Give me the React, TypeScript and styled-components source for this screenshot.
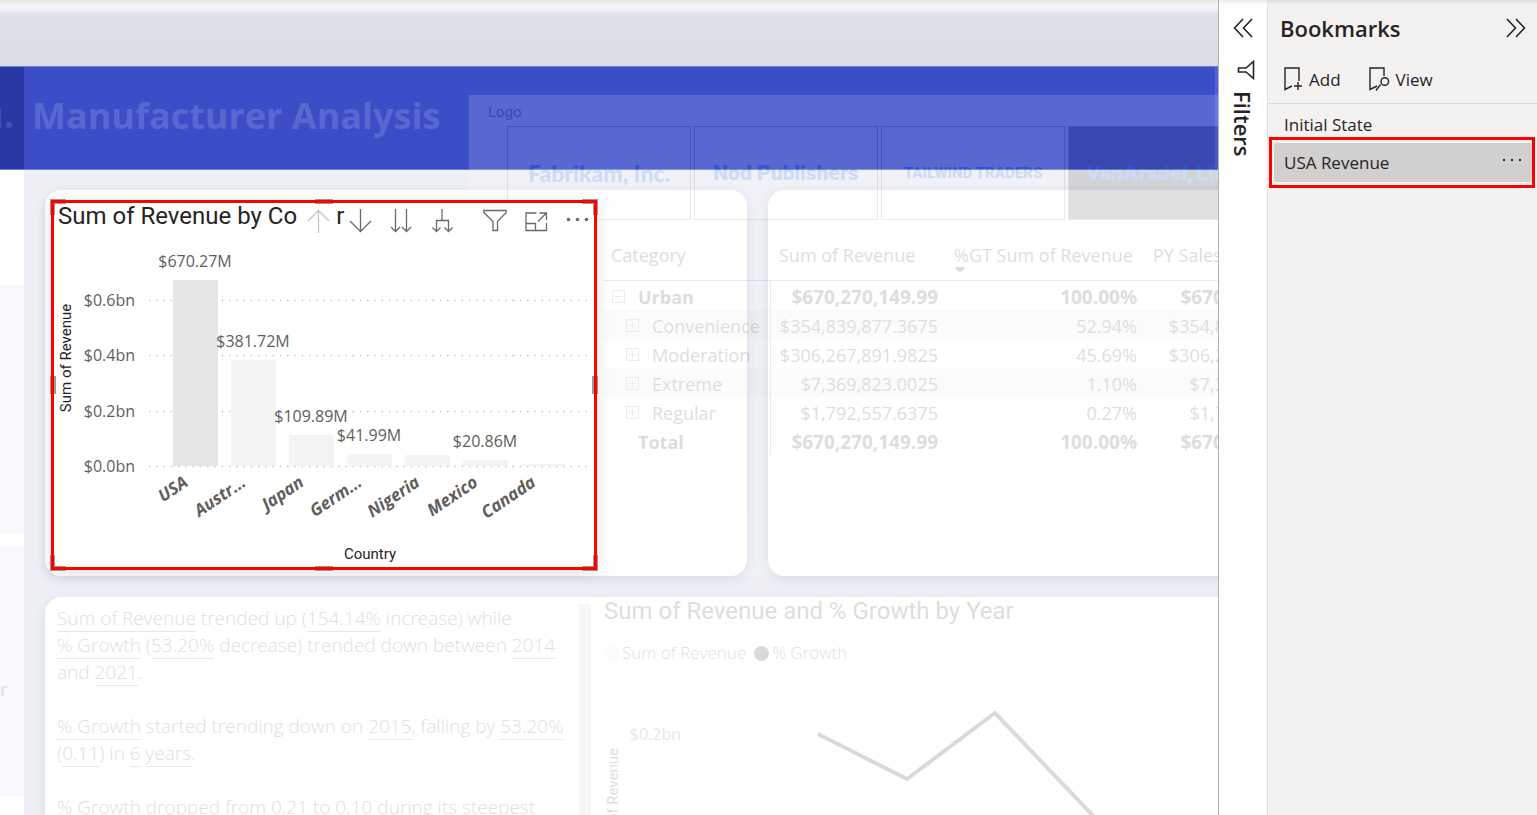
import React from "react";
import styled, { createGlobalStyle, css } from "styled-components";

const sans = `"Open Sans", "Noto Sans", sans-serif`;
const din = `Roboto, "Liberation Sans", sans-serif`;

const GlobalStyle = createGlobalStyle`
  *, *::before, *::after { box-sizing: border-box; }
  body { margin: 0; font-family: ${sans}; color: #252423; background: #eef0f6; }
  h1, h2, p, ul { margin: 0; padding: 0; }
  button { font: inherit; color: inherit; background: none; border: 0; padding: 0; cursor: pointer; }
  svg { display: block; }
`;

const Shell = styled.div`
  display: flex;
  height: 100vh;
  overflow: hidden;
`;

/* ---------- report canvas ---------- */

const Canvas = styled.main`
  position: relative;
  flex: 1;
  min-width: 0;
  overflow: hidden;
  display: flex;
  flex-direction: column;
`;

const TopBand = styled.div`
  height: 66px;
  background: linear-gradient(#e4e4e4 0, #f5f5f5 4px, #f3f3f3 9px, #dee1e9 15px, #dadde5 66px);
`;

const Banner = styled.header`
  display: flex;
  height: 104px;
  background: #3b4ec8;
  border-top: 1px solid #7380d2;
  border-bottom: 1px solid #6f7edb;
`;

const BannerRail = styled.div`
  width: 24px;
  display: flex;
  align-items: center;
  justify-content: flex-end;
  padding: 0 10px 8px 0;
  background: #2838a4;
  color: #4452b2;
  font-size: 36px;
  font-weight: 700;
  overflow: hidden;
`;

const BannerTitle = styled.h1`
  flex: 1;
  padding-left: 8px;
  color: #5868d0;
  font-size: 36px;
  line-height: 98px;
  font-weight: 700;
  border-right: 3px solid #4f63dc;
`;

const Body = styled.div`
  flex: 1;
  display: flex;
  min-height: 0;
`;

const Rail = styled.div`
  width: 24px;
  flex: none;
  display: flex;
  flex-direction: column;
  gap: 13px;
  padding-top: 115px;
  background: #fff;
`;

const RailBlock = styled.div`
  height: 249px;
  flex: none;
  background: #f8f9fc;
  color: #dcdcdf;
  font-size: 19px;
  line-height: 284px;
`;

const Page = styled.div`
  flex: 1;
  min-width: 0;
  display: flex;
  flex-direction: column;
  gap: 21px;
  padding: 20px 0 0 21px;
  margin-right: -40px;
`;

const CardRow = styled.div`
  display: flex;
  flex: none;
  gap: 21px;
`;

const Card = styled.div<{ $width?: number; $height: number }>`
  flex: ${(p) => (p.$width ? "none" : 1)};
  ${(p) => p.$width && css`width: ${p.$width}px;`}
  min-height: ${(p) => p.$height}px;
  background: #fff;
  border-radius: 16px;
  box-shadow: 0 3px 12px rgba(30, 40, 70, 0.1);
`;

/* A visual has its own spot on the free report canvas. */
const Visual = styled.section<{ $x: number; $y: number; $w?: number; $h?: number; $faded?: boolean }>`
  position: absolute;
  left: ${(p) => p.$x}px;
  top: ${(p) => p.$y}px;
  ${(p) => (p.$w ? css`width: ${p.$w}px;` : css`right: 0;`)}
  ${(p) => p.$h && css`height: ${p.$h}px;`}
  background: #fff;
  opacity: ${(p) => (p.$faded ? 0.15 : 1)};
`;

/* ---------- logo slicer ---------- */

const SlicerLabel = styled.p`
  padding: 7px 0 0 19px;
  font-family: ${din};
  font-size: 15px;
  line-height: 20px;
`;

const Tiles = styled.div`
  display: flex;
  gap: 3px;
  padding: 4px 0 0 38px;
  overflow: hidden;
`;

const Tile = styled.button<{ $selected?: boolean; $font: string; $size: number }>`
  flex: none;
  width: 184px;
  height: 94px;
  border: 1px solid #777;
  background: ${(p) => (p.$selected ? "#333" : "transparent")};
  color: #146eff;
  font-family: ${(p) => p.$font};
  font-size: ${(p) => p.$size}px;
  font-weight: 900;
  white-space: nowrap;
`;

/* ---------- selected column chart ---------- */

const ChartVisual = styled(Visual)`
  isolation: isolate;
  padding: 3px;
  box-shadow: 0 3px 14px rgba(0, 0, 0, 0.12);
  &::after {
    content: "";
    position: absolute;
    inset: 0;
    border: 3px solid #fe0000;
    pointer-events: none;
  }
`;

const ChartHeader = styled.div`
  display: flex;
  height: 31px;
  padding-left: 4px;
`;

const ChartTitle = styled.h2`
  font-family: ${din};
  font-size: 24px;
  line-height: 26px;
  font-weight: 400;
  white-space: nowrap;
`;

const TitleEnd = styled(ChartTitle).attrs({ as: "span" })`
  margin: 0 4px 0 6px;
`;

const Tool = styled.button<{ $dim?: boolean; $gap?: number }>`
  width: 24px;
  height: 24px;
  margin: 6px 0 0 ${(p) => p.$gap ?? 17}px;
  color: ${(p) => (p.$dim ? "#c4c4c4" : "#6b6a69")};
`;

const Handle = styled.i<{ $edge: string }>`
  position: absolute;
  z-index: -1;
  background: #999;
  ${(p) => p.$edge}
`;

const AxisText = styled.text`
  font-family: ${sans};
  font-size: 16px;
  fill: #605e5c;
`;

const CategoryText = styled(AxisText)`
  font-size: 17px;
  font-weight: 700;
  font-style: italic;
`;

const AxisTitle = styled.text`
  font-family: ${din};
  font-size: 15px;
  fill: #252423;
`;

const columns = [
  { name: "USA", top: 46, value: "$670.27M", valueY: 33 },
  { name: "Austr...", top: 126, value: "$381.72M", valueY: 113 },
  { name: "Japan", top: 201, value: "$109.89M", valueY: 188 },
  { name: "Germ...", top: 220, value: "$41.99M", valueY: 207 },
  { name: "Nigeria", top: 221 },
  { name: "Mexico", top: 226, value: "$20.86M", valueY: 213 },
  { name: "Canada", top: 230 },
];

const ticks = [
  { label: "$0.6bn", y: 66 },
  { label: "$0.4bn", y: 121 },
  { label: "$0.2bn", y: 177 },
  { label: "$0.0bn", y: 232 },
];

function ColumnChart() {
  return (
    <svg width="540" height="332" viewBox="1 0 540 332" role="img" aria-label="Sum of Revenue by Country">
      {ticks.map((t) => (
        <g key={t.label}>
          <line x1="96" x2="535" y1={t.y + 0.5} y2={t.y + 0.5} stroke="#c3c2c1" strokeWidth="1.4" strokeDasharray="1.4 5.87" />
          <AxisText x="82" y={t.y + 6} textAnchor="end">{t.label}</AxisText>
        </g>
      ))}
      {columns.map((c, i) => (
        <g key={c.name}>
          <rect x={120 + i * 58} y={c.top} width="45" height={232 - c.top} fill={i === 0 ? "#e6e6e6" : "#f4f4f4"} />
          {c.value && <AxisText x={142 + i * 58} y={c.valueY} textAnchor="middle">{c.value}</AxisText>}
          <CategoryText textAnchor="end" transform={`translate(${136 + i * 58} 251) rotate(-34)`}>{c.name}</CategoryText>
        </g>
      ))}
      <AxisTitle textAnchor="middle" transform="translate(18 124) rotate(-90)">Sum of Revenue</AxisTitle>
      <AxisTitle x="317" y="325" textAnchor="middle">Country</AxisTitle>
    </svg>
  );
}

/* ---------- matrix ---------- */

const Matrix = styled.table`
  margin-top: 9px;
  border-collapse: separate;
  border-spacing: 0;
  table-layout: fixed;
  width: 732px;
  font-size: 18px;
  line-height: 24px;
`;

const Head = styled.th`
  height: 41px;
  padding: 3px 0 0 8px;
  vertical-align: top;
  text-align: left;
  font-weight: 400;
  white-space: nowrap;
  border-bottom: 1px solid #2a93f5;
`;

const SortMark = styled.i`
  display: block;
  width: 0;
  border: 6px solid transparent;
  border-top-color: #252423;
  border-bottom: 0;
`;

const Row = styled.tr<{ $bold?: boolean; $striped?: boolean }>`
  height: 29px;
  font-weight: ${(p) => (p.$bold ? 700 : 400)};
  background: ${(p) => (p.$striped ? "#e6e6e6" : "transparent")};
`;

const RowHead = styled.th<{ $indent: number }>`
  padding: 2px 0 0 ${(p) => p.$indent}px;
  text-align: left;
  font-weight: inherit;
  white-space: nowrap;
  border-right: 1px solid #2a93f5;
`;

const RowLabel = styled.span`
  display: flex;
  align-items: center;
  gap: 13px;
`;

const Cell = styled.td<{ $bold?: boolean }>`
  padding: 2px 8px 0 0;
  text-align: right;
  font-size: ${(p) => (p.$bold ? 19 : 18)}px;
`;

const rows = [
  { name: "Urban", indent: 9, sign: "-", revenue: "$670,270,149.99", share: "100.00%", bold: true },
  { name: "Convenience", indent: 23, sign: "+", revenue: "$354,839,877.3675", share: "52.94%", striped: true },
  { name: "Moderation", indent: 23, sign: "+", revenue: "$306,267,891.9825", share: "45.69%" },
  { name: "Extreme", indent: 23, sign: "+", revenue: "$7,369,823.0025", share: "1.10%", striped: true },
  { name: "Regular", indent: 23, sign: "+", revenue: "$1,792,557.6375", share: "0.27%" },
  { name: "Total", indent: 35, sign: "", revenue: "$670,270,149.99", share: "100.00%", bold: true },
];

function Expander({ sign, name }: { sign: string; name: string }) {
  return (
    <button aria-label={`${sign === "+" ? "Expand" : "Collapse"} ${name}`}>
      <svg width="13" height="13" viewBox="0 0 13 13" fill="none" stroke="#888">
        <rect x=".5" y=".5" width="12" height="12" />
        <path d={sign === "+" ? "M3 6.5h7M6.5 3v7" : "M3 6.5h7"} />
      </svg>
    </button>
  );
}

/* ---------- narrative ---------- */

const Narrative = styled.div`
  display: flex;
  flex-direction: column;
  gap: 27px;
  padding: 6px 0 0 6px;
  font-size: 19px;
  line-height: 27px;
  font-weight: 300;
  white-space: nowrap;
`;

const Fact = styled.span`
  border-bottom: 1px solid #5050e0;
`;

const ScrollTrack = styled.div`
  width: 12px;
  height: 100%;
  background: #c4c4c4;
`;

/* ---------- growth chart ---------- */

const Legend = styled.div`
  display: flex;
  gap: 8px;
  padding-top: 17px;
  font-size: 17px;
  line-height: 24px;
  font-weight: 300;
`;

const LegendItem = styled.span<{ $color: string }>`
  display: flex;
  align-items: center;
  gap: 3px;
  &::before {
    content: "";
    width: 15px;
    height: 15px;
    border-radius: 50%;
    background: ${(p) => p.$color};
  }
`;

const GrowthVisual = styled(Visual)`
  padding-left: 4px;
`;

function GrowthChart() {
  return (
    <svg width="700" height="180" viewBox="0 0 700 180" role="img" aria-label="Sum of Revenue and % Growth by Year">
      <g fill="#fafafa">
        <rect x="271" y="135" width="69" height="45" />
        <rect x="356" y="108" width="71" height="72" />
        <rect x="444" y="90" width="71" height="90" />
        <rect x="533" y="81" width="69" height="99" />
      </g>
      <g stroke="#b5b5b5" strokeDasharray="1.4 5.87">
        <path d="M91 69.500H700" />
        <path d="M127.500 18V180M303.500 18V180M479.500 18V180" />
      </g>
      <AxisText x="77" y="75" textAnchor="end">$0.2bn</AxisText>
      <AxisTitle textAnchor="end" transform="translate(14 83) rotate(-90)">Sum of Revenue</AxisTitle>
      <path d="M214 69L303 114L391 48L496 158" fill="none" stroke="#111" strokeWidth="4" />
    </svg>
  );
}

/* ---------- side panes ---------- */

const paneShade = css`
  background-image: linear-gradient(rgba(0, 0, 0, 0.08), transparent 5px);
`;

const FiltersPane = styled.aside`
  flex: none;
  width: 49px;
  display: flex;
  flex-direction: column;
  align-items: center;
  padding-top: 18px;
  background-color: #fff;
  ${paneShade}
  border-left: 1px solid #b0afae;
`;

const FilterIcon = styled.span`
  margin: 22px 0 0 6px;
`;

const FiltersLabel = styled.h2`
  margin: 11px 0 0;
  writing-mode: vertical-rl;
  font-size: 22px;
  line-height: 28px;
  font-weight: 600;
`;

const BookmarksPane = styled.aside`
  flex: none;
  width: 270px;
  background-color: #f3f2f1;
  ${paneShade}
  border-left: 1px solid #e1dfdd;
`;

const PaneHeader = styled.header`
  display: flex;
  align-items: center;
  justify-content: space-between;
  height: 56px;
  padding: 0 11px 0 12px;
`;

const PaneTitle = styled.h2`
  font-size: 22px;
  line-height: 30px;
  font-weight: 600;
`;

const Actions = styled.div`
  display: flex;
  gap: 27px;
  height: 48px;
  padding: 0 0 1px 15px;
  border-bottom: 1px solid #dddbd9;
`;

const Action = styled.button`
  display: flex;
  align-items: center;
  gap: 6px;
  font-size: 17px;
`;

const BookmarkList = styled.ul`
  list-style: none;
`;

const Bookmark = styled.button`
  display: flex;
  width: 100%;
  height: 33px;
  padding: 8px 0 0 16px;
  font-size: 17px;
  line-height: 26px;
`;

const Highlight = styled.li`
  margin: 0 2px 0 1px;
  padding: 3px 0 3px 2px;
  border: 3px solid #fe0000;
`;

const SelectedBookmark = styled.div`
  display: flex;
  align-items: center;
  justify-content: space-between;
  height: 39px;
  padding: 0 10px;
  background: #d2d0ce;
  border-radius: 2px;
  font-size: 17px;
`;

const Icon = ({ d, w = 24, h = 24, sw = 1.3 }: { d: string; w?: number; h?: number; sw?: number }) => (
  <svg width={w} height={h} viewBox={`0 0 ${w} ${h}`} fill="none" stroke="currentColor" strokeWidth={sw}>
    <path d={d} />
  </svg>
);

/* Resize grips: an L in each corner and a bar in the middle of each side. */
const grips = ["left", "right"].flatMap((h) =>
  ["top", "bottom"].flatMap((v) => [
    `${h}:-1px;${v}:-1px;width:16px;height:5px;`,
    `${h}:-1px;${v}:-1px;width:5px;height:16px;`,
  ]),
).concat([
  "left:-1px;top:calc(50% - 9px);width:6px;height:18px;",
  "right:-1px;top:calc(50% - 9px);width:6px;height:18px;",
  "left:calc(50% - 9px);top:-1px;width:18px;height:5px;",
  "left:calc(50% - 9px);bottom:-1px;width:18px;height:5px;",
]);

export default function App() {
  return (
    <>
      <GlobalStyle />
      <Shell>
        <Canvas>
          <TopBand />
          <Banner>
            <BannerRail>u.</BannerRail>
            <BannerTitle>Manufacturer Analysis</BannerTitle>
          </Banner>
          <Body>
            <Rail>
              <RailBlock />
              <RailBlock>r</RailBlock>
            </Rail>
            <Page>
              <CardRow>
                <Card $width={702} $height={386} />
                <Card $height={386} />
              </CardRow>
              <Card $height={300} />
            </Page>
          </Body>

          <Visual $x={469} $y={95} $h={136} $faded>
            <SlicerLabel>Logo</SlicerLabel>
            <Tiles>
              <Tile $font="Lato" $size={23}>Fabrikam, Inc.</Tile>
              <Tile $font="Roboto" $size={21}>Nod Publishers</Tile>
              <Tile $font="Roboto" $size={15}>TAILWIND TRADERS</Tile>
              <Tile $font="Inter" $size={19} $selected>VanArsdel, Ltd.</Tile>
            </Tiles>
          </Visual>

          <Visual $x={603} $y={231} $h={345} $faded>
            <Matrix>
              <colgroup>
                <col style={{ width: 168 }} />
                <col style={{ width: 175 }} />
                <col style={{ width: 199 }} />
                <col style={{ width: 190 }} />
              </colgroup>
              <thead>
                <tr>
                  <Head>Category</Head>
                  <Head>Sum of Revenue</Head>
                  <Head>%GT Sum of Revenue<SortMark /></Head>
                  <Head>PY Sales</Head>
                </tr>
              </thead>
              <tbody>
                {rows.map((r) => (
                  <Row key={r.name} $bold={r.bold} $striped={r.striped}>
                    <RowHead scope="row" $indent={r.indent}>
                      <RowLabel>
                        {r.sign && <Expander sign={r.sign} name={r.name} />}
                        {r.name}
                      </RowLabel>
                    </RowHead>
                    <Cell $bold={r.bold}>{r.revenue}</Cell>
                    <Cell $bold={r.bold}>{r.share}</Cell>
                    <Cell $bold={r.bold}>{r.revenue}</Cell>
                  </Row>
                ))}
              </tbody>
            </Matrix>
          </Visual>

          <ChartVisual $x={51} $y={200} $w={546} $h={370}>
            {grips.map((g) => <Handle key={g} $edge={g} />)}
            <ChartHeader>
              <ChartTitle>Sum of Revenue by Co</ChartTitle>
              <Tool $dim $gap={9} aria-label="Drill up"><Icon d="M12.500 24V1.500M2 12L12.500 1.500L23 12" /></Tool>
              <TitleEnd>r</TitleEnd>
              <Tool $gap={0} aria-label="Drill down"><Icon d="M12.500 0V22.500M2 12L12.500 22.500L23 12" /></Tool>
              <Tool aria-label="Go to the next level"><Icon d="M6.500 0V22.500M2 18L6.500 22.500L11 18M17.500 0V22.500M13 18L17.500 22.500L22 18" /></Tool>
              <Tool aria-label="Expand all down one level"><Icon d="M12 0V11.500M6.500 22.500V11.500H18.500V22.500M2.500 18.500L6.500 22.500L10.500 18.500M14.500 18.500L18.500 22.500L22.500 18.500" /></Tool>
              <Tool $gap={29} aria-label="Filters"><Icon d="M.800 1.500H23.200V3.500L14.500 12.500V21.500H10V12.500L.800 3.500Z" /></Tool>
              <Tool aria-label="Focus mode"><Icon d="M12.500 4H2V21.500H22.500V14M2 14.500H11.500V21.500M14 12.500L22.500 4M15.500 4H22.500V11" /></Tool>
              <Tool aria-label="More options">
                <svg width="24" height="24" fill="currentColor"><circle cx="3.500" cy="10.500" r="1.800" /><circle cx="12.500" cy="10.500" r="1.800" /><circle cx="21.500" cy="10.500" r="1.800" /></svg>
              </Tool>
            </ChartHeader>
            <ColumnChart />
          </ChartVisual>

          <Visual $x={51} $y={599} $w={524} $h={230} $faded>
            <Narrative>
              <p>
                <Fact>Sum of Revenue</Fact> trended up (<Fact>154.14%</Fact> increase) while<br />
                <Fact>% Growth</Fact> (<Fact>53.20%</Fact> decrease) trended down between <Fact>2014</Fact><br />
                and <Fact>2021</Fact>.
              </p>
              <p>
                <Fact>% Growth</Fact> started trending down on <Fact>2015</Fact>, falling by <Fact>53.20%</Fact><br />
                (<Fact>0.11</Fact>) in <Fact>6</Fact> <Fact>years</Fact>.
              </p>
              <p><Fact>% Growth</Fact> dropped from <Fact>0.21</Fact> to <Fact>0.10</Fact> during its steepest</p>
            </Narrative>
          </Visual>
          <Visual $x={579} $y={604} $w={12} $h={220} $faded><ScrollTrack /></Visual>

          <GrowthVisual $x={600} $y={598} $h={230} $faded>
            <ChartTitle>Sum of Revenue and % Growth by Year</ChartTitle>
            <Legend>
              <LegendItem $color="#e6e6e6">Sum of Revenue</LegendItem>
              <LegendItem $color="#111">% Growth</LegendItem>
            </Legend>
            <GrowthChart />
          </GrowthVisual>
        </Canvas>

        <FiltersPane>
          <button aria-label="Expand filters pane"><Icon w={20} h={20} sw={1.6} d="M10 1L1.500 10L10 19M19 1L10.500 10L19 19" /></button>
          <FilterIcon><Icon w={18} h={20} sw={1.6} d="M16.500 1.500V18.500L9 12H1.500V8H9L16.500 1.500Z" /></FilterIcon>
          <FiltersLabel>Filters</FiltersLabel>
        </FiltersPane>

        <BookmarksPane>
          <PaneHeader>
            <PaneTitle>Bookmarks</PaneTitle>
            <button aria-label="Collapse bookmarks pane"><Icon w={20} h={20} sw={1.6} d="M1 1L9.500 10L1 19M10 1L18.500 10L10 19" /></button>
          </PaneHeader>
          <Actions>
            <Action><Icon w={20} h={26} sw={1.4} d="M9 20L2 23.500V2H16V15M15 16V24M11 20H19" />Add</Action>
            <Action><Icon w={22} h={26} sw={1.4} d="M9 20L2 23.500V2H16V10M12.500 18.500L8 24.500M13 15.500a3.800 3.800 0 1 0 7.600 0a3.800 3.800 0 1 0 -7.600 0" />View</Action>
          </Actions>
          <BookmarkList>
            <li><Bookmark>Initial State</Bookmark></li>
            <Highlight>
              <SelectedBookmark>
                <button>USA Revenue</button>
                <button aria-label="More options">
                  <svg width="20" height="10" fill="#252423"><rect x="1" y="1" width="2" height="2" /><rect x="9" y="1" width="2" height="2" /><rect x="17" y="1" width="2" height="2" /></svg>
                </button>
              </SelectedBookmark>
            </Highlight>
          </BookmarkList>
        </BookmarksPane>
      </Shell>
    </>
  );
}
